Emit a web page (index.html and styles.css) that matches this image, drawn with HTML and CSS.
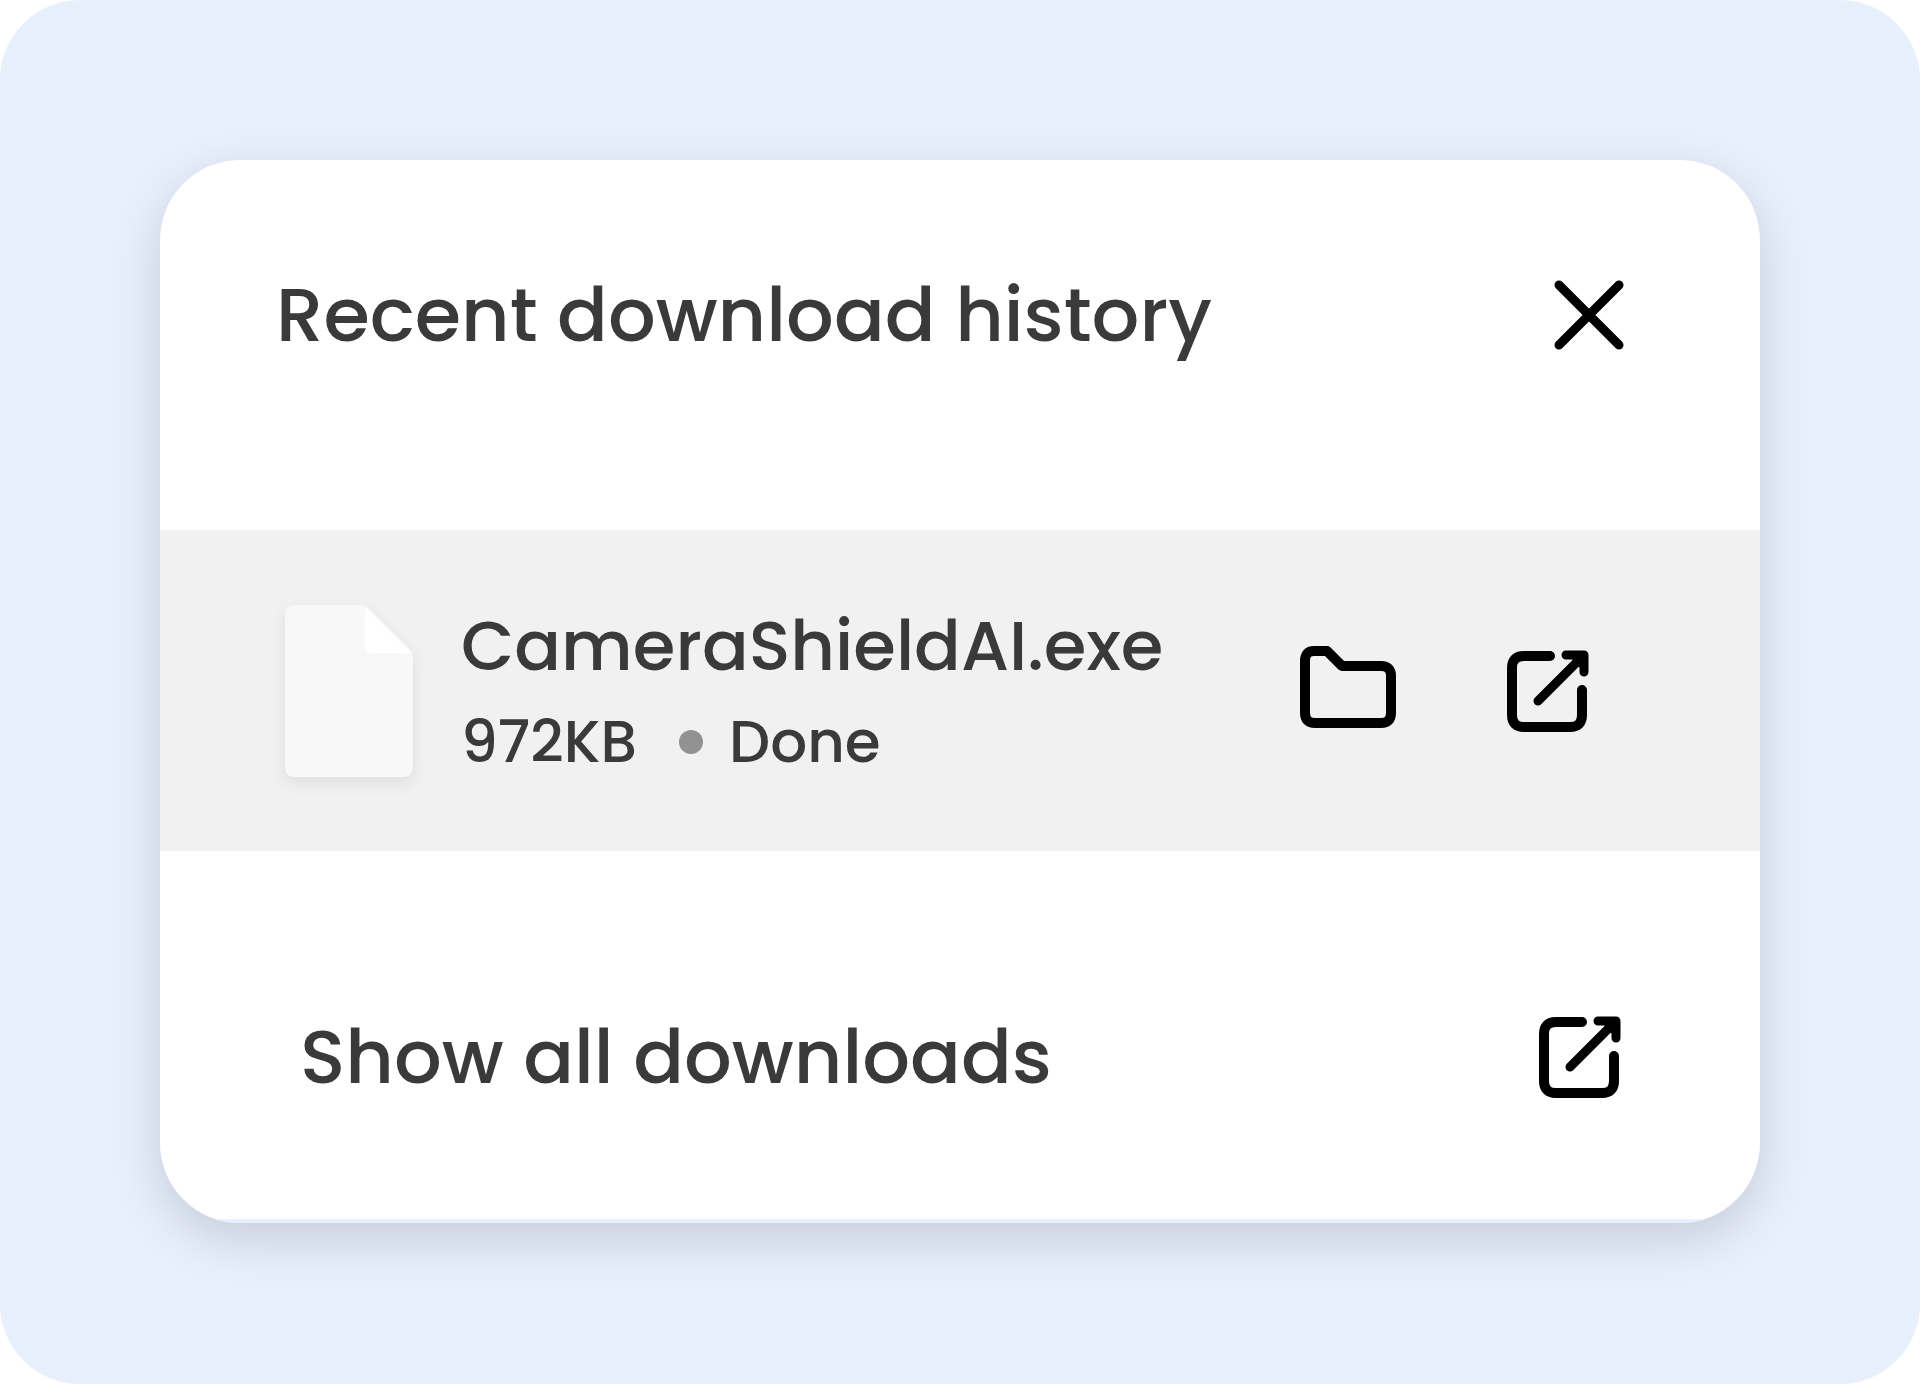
FILE: index.html
```html
<!DOCTYPE html>
<html lang="en">
<head>
<meta charset="utf-8">
<meta name="viewport" content="width=device-width, initial-scale=1">
<title>Recent download history</title>
<link rel="stylesheet" href="styles.css">
</head>
<body>
<svg class="sprite" aria-hidden="true">
  <symbol id="open-external" viewBox="0 0 88 88">
    <path d="M46 9H20Q8 9 8 21V68Q8 80 20 80H66Q78 80 78 68V43" fill="none" stroke="currentColor" stroke-width="10" stroke-linecap="round" stroke-linejoin="round"/>
    <path d="M34 54L77 11" fill="none" stroke="currentColor" stroke-width="9" stroke-linecap="round"/>
    <path d="M62 8H80V25M72 10L80 19" fill="none" stroke="currentColor" stroke-width="9" stroke-linecap="round" stroke-linejoin="round"/>
  </symbol>
</svg>
<main class="stage">
  <section class="card" aria-labelledby="title">
    <header class="header">
      <h1 class="title" id="title">Recent download history</h1>
      <button class="icon-button" type="button" aria-label="Close">
        <svg class="icon-close" viewBox="0 0 72 72"><path d="M6 6L66 66M66 6L6 66" fill="none" stroke="currentColor" stroke-width="9" stroke-linecap="round"/></svg>
      </button>
    </header>
    <div class="item">
      <svg class="icon-file" viewBox="0 0 128 172" aria-hidden="true">
        <path d="M10 0H76Q80 0 83 3L125 44Q128 47 128 51V162Q128 172 118 172H10Q0 172 0 162V10Q0 0 10 0Z" fill="#f8f8f8"/>
        <path d="M80 2L126 48H88Q80 48 80 40Z" fill="#fff"/>
      </svg>
      <div class="details">
        <p class="name">CameraShieldAI.exe</p>
        <p class="meta"><span>972KB</span><span class="dot"></span><span>Done</span></p>
      </div>
      <div class="actions">
        <button class="icon-button" type="button" aria-label="Show in folder">
          <svg class="icon-folder" viewBox="0 4 104 92"><path d="M18 10H31L46 25H85Q95 25 95 35V72Q95 82 85 82H19Q9 82 9 72V20Q9 10 18 10Z" fill="none" stroke="currentColor" stroke-width="10" stroke-linejoin="round"/></svg>
        </button>
        <button class="icon-button" type="button" aria-label="Open file">
          <svg class="icon-open"><use href="#open-external"/></svg>
        </button>
      </div>
    </div>
    <a class="footer" href="#">
      <span>Show all downloads</span>
      <svg class="icon-open"><use href="#open-external"/></svg>
    </a>
  </section>
</main>
</body>
</html>
```
FILE: styles.css
```css
* { box-sizing: border-box; }

body {
  margin: 0;
  background: #fff;
  color: #3a3a3a;
  font-family: Poppins, Inter, "Liberation Sans", sans-serif;
  font-weight: 500;
}

h1, p { margin: 0; font-weight: inherit; }

svg { display: block; flex: none; }

.sprite { position: absolute; width: 0; height: 0; }

.stage {
  min-height: 100vh;
  padding: 160px;
  border-radius: 80px;
  background: #e8effd;
}

.card {
  overflow: hidden;
  border-radius: 80px;
  background: #fff;
  box-shadow: 0 16px 52px rgba(0, 0, 0, 0.15);
}

.header,
.item,
.footer {
  display: flex;
  align-items: center;
  justify-content: space-between;
}

.header { padding: 107px 135px 167px 116px; }

.title,
.footer {
  font-size: 75px;
  line-height: 96px;
}

.icon-button {
  padding: 0;
  border: 0;
  background: none;
  color: #000;
  cursor: pointer;
}

.icon-close { width: 72px; height: 72px; }
.icon-folder { width: 104px; height: 92px; }
.icon-open { width: 88px; height: 88px; color: #000; }

.item {
  padding: 68px 168px 67px 125px;
  background: #f1f1f1;
}

.icon-file {
  width: 128px;
  height: 172px;
  filter: drop-shadow(0 6px 8px rgba(0, 0, 0, 0.08));
}

.details { flex: 1; padding-left: 48px; }

.name {
  margin-bottom: 6px;
  font-size: 69px;
  line-height: 96px;
}

.meta {
  display: flex;
  align-items: center;
  font-size: 58px;
  line-height: 84px;
}

.dot {
  width: 24px;
  height: 24px;
  margin: 0 26px 0 42px;
  border-radius: 50%;
  background: #929292;
}

.actions {
  display: flex;
  align-items: center;
  gap: 104px;
}

.footer {
  padding: 158px 136px 114px 140px;
  border-bottom: 4px solid #e8effd;
  color: #3a3a3a;
  text-decoration: none;
}
```
